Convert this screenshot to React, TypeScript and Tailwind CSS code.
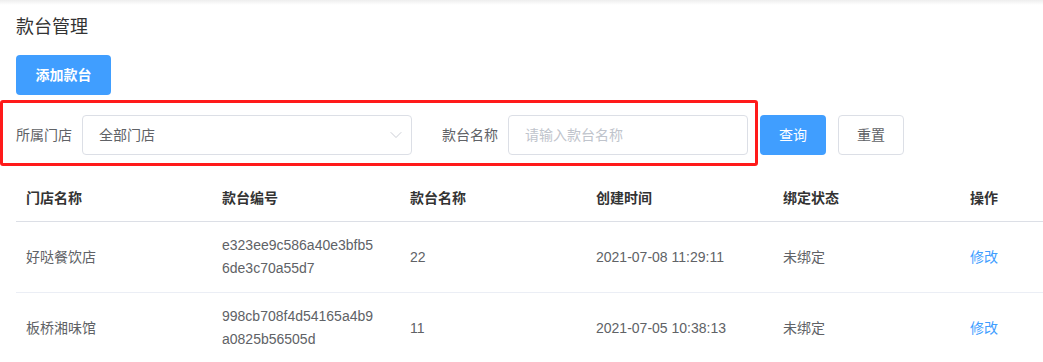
import { ChevronDown } from 'lucide-react';

const rows = [
  { shop: '好哒餐饮店', code: ['e323ee9c586a40e3bfb5', '6de3c70a55d7'], name: '22', time: '2021-07-08 11:29:11', status: '未绑定' },
  { shop: '板桥湘味馆', code: ['998cb708f4d54165a4b9', 'a0825b56505d'], name: '11', time: '2021-07-05 10:38:13', status: '未绑定' },
];

const cols = 'grid grid-cols-[196px_188px_186px_187px_187px_83px]';

export default function App() {
  return (
    <div
      className="relative h-[362px] w-[1043px] overflow-hidden bg-white"
      style={{ fontFamily: '"Liberation Sans", "Noto Sans CJK SC", sans-serif' }}
    >
      <div className="h-[5px] bg-gradient-to-b from-[#eeeeee] to-white" />
      <h1 className="mt-[12px] pl-4 text-[18px] leading-[20px] text-[#333333]">款台管理</h1>

      <div className="mt-[18px] pl-4">
        <button className="h-[40px] w-[95px] rounded-[4px] bg-[#409eff] text-[14px] font-semibold text-white">
          添加款台
        </button>
      </div>

      <div className="mt-[20px] flex items-center pl-4 text-[14px]">
        <span className="mr-[10px] text-[#606266]">所属门店</span>
        <div className="flex h-[40px] w-[330px] items-center justify-between rounded-[4px] border border-[#dcdfe6] pl-4 pr-[5px] text-[#606266]">
          <span>全部门店</span>
          <ChevronDown className="h-[20px] w-[20px] text-[#c0c4cc]" strokeWidth={1} />
        </div>
        <span className="ml-[30px] mr-[10px] text-[#606266]">款台名称</span>
        <div className="flex h-[40px] w-[240px] items-center rounded-[4px] border border-[#dcdfe6] pl-4 text-[#c0c4cc]">
          请输入款台名称
        </div>
        <button className="ml-[12px] h-[40px] w-[66px] rounded-[4px] bg-[#409eff] text-white">查询</button>
        <button className="ml-[12px] h-[40px] w-[66px] rounded-[4px] border border-[#dcdfe6] bg-white text-[#606266]">
          重置
        </button>
      </div>

      <div className="pointer-events-none absolute left-0 top-[100px] h-[66px] w-[758px] rounded-[3px] border-[3px] border-[#ff1a1a]" />

      <div className="ml-4 mt-[20px] text-[14px]">
        <div className={`${cols} h-[47px] items-center border-b border-[#dcdfe6] font-semibold text-[#333333]`}>
          <div className="px-[10px]">门店名称</div>
          <div className="px-[10px]">款台编号</div>
          <div className="px-[10px]">款台名称</div>
          <div className="px-[10px]">创建时间</div>
          <div className="px-[10px]">绑定状态</div>
          <div className="px-[10px]">操作</div>
        </div>
        {rows.map((r) => (
          <div key={r.shop} className={`${cols} h-[71px] items-center border-b border-[#ebeef5] text-[#606266]`}>
            <div className="px-[10px]">{r.shop}</div>
            <div className="px-[10px] leading-[23px]">
              <div>{r.code[0]}</div>
              <div>{r.code[1]}</div>
            </div>
            <div className="px-[10px]">{r.name}</div>
            <div className="px-[10px]">{r.time}</div>
            <div className="px-[10px]">{r.status}</div>
            <div className="px-[10px] text-[#409eff]">修改</div>
          </div>
        ))}
      </div>
    </div>
  );
}
